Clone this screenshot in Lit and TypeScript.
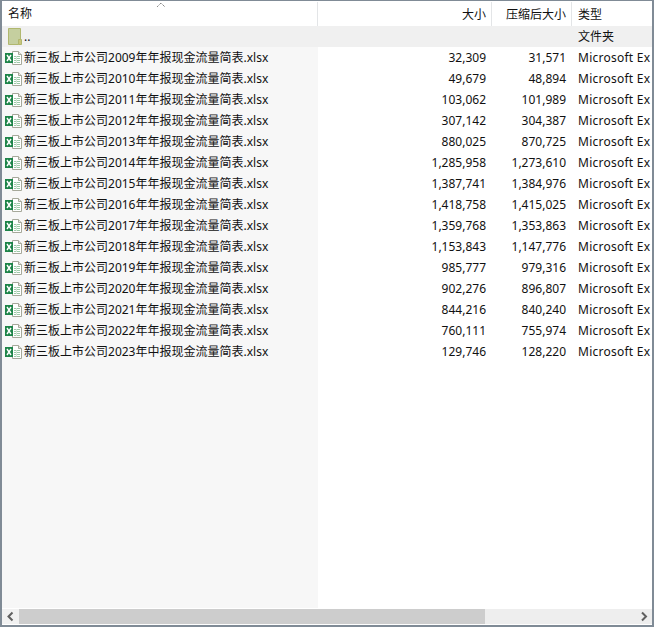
import { LitElement, html, css, svg } from "lit";
import { customElement } from "lit/decorators.js";

const rows: [string, string, string][] = [
  ["2009年年", "32,309", "31,571"],
  ["2010年年", "49,679", "48,894"],
  ["2011年年", "103,062", "101,989"],
  ["2012年年", "307,142", "304,387"],
  ["2013年年", "880,025", "870,725"],
  ["2014年年", "1,285,958", "1,273,610"],
  ["2015年年", "1,387,741", "1,384,976"],
  ["2016年年", "1,418,758", "1,415,025"],
  ["2017年年", "1,359,768", "1,353,863"],
  ["2018年年", "1,153,843", "1,147,776"],
  ["2019年年", "985,777", "979,316"],
  ["2020年年", "902,276", "896,807"],
  ["2021年年", "844,216", "840,240"],
  ["2022年年", "760,111", "755,974"],
  ["2023年中", "129,746", "128,220"],
];

const excel = svg`<svg class="ico" width="17" height="17" viewBox="0 0 17 17">
  <path d="M7.5 2.5H13.5L16.5 5.5V15.5H7.5Z" fill="#fff" stroke="#a6a89a"/>
  <path d="M13.5 2.5V5.5H16.5" fill="#e8e8e0" stroke="#a6a89a"/>
  <path d="M9 7.5h6M9 9.5h6M9 11.5h6M9 13.5h6" stroke="#9ecaa8"/>
  <path d="M11.5 7v7" stroke="#d5e6d8"/>
  <rect x="0" y="4" width="8" height="10" fill="#1e8449"/>
  <path d="M2 6 6 12M6 6 2 12" stroke="#fff" stroke-width="1.4"/>
</svg>`;

const folder = svg`<svg width="14" height="17" viewBox="0 0 14 17">
  <path d="M.5.5H12.5V12.5L10.5 16.5H.5Z" fill="#c5cf9f" stroke="#b0b76e"/>
  <path d="M10.5 11.5H13.5V16.5H10.5Z" fill="#c9c57c" stroke="#b0b76e"/>
</svg>`;

@customElement("app-root")
export class AppRoot extends LitElement {
  static styles = css`
    :host {
      display: flex;
      flex-direction: column;
      box-sizing: border-box;
      width: 654px;
      height: 627px;
      background: #fff;
      border: 2px solid #808b96;
      border-top-width: 1px;
      font: 12px/21px "Noto Sans", "Noto Sans CJK SC", sans-serif;
      color: #111;
      overflow: hidden;
    }
    .body { flex: 1; position: relative; display: flex; flex-direction: column; min-height: 0; }
    .tint { position: absolute; left: 0; top: 0; bottom: 0; width: 316px; background: #f7f7f7; }
    .row {
      position: relative;
      display: grid;
      grid-template-columns: 316px 174px 80px 1fr;
      height: 21px;
      white-space: nowrap;
      overflow: hidden;
    }
    .head { height: 25px; line-height: 26px; background: #fff; }
    .head > div { border-right: 1px solid #e3e5e7; box-sizing: border-box; height: 24px; margin-top: 1px; }
    .head > div:last-child { border-right: 0; }
    .head .name { padding-left: 6px; position: relative; }
    .caret { position: absolute; left: 154px; top: 0; display: block; }
    .parent { background: #f0f0f0; }
    .name { display: flex; align-items: center; padding-left: 3px; }
    .ico { flex: none; margin-right: 2px; }
    .parent .name { padding-left: 6px; }
    .parent svg { margin-right: 2px; }
    .num { text-align: right; padding-right: 6px; }
    .head .num { padding-right: 5px; }
    .type { padding-left: 6px; overflow: hidden; }
    .ms { letter-spacing: 0.25px; }
    .bar {
      flex: none;
      height: 15px;
      margin: 1px 0;
      display: flex;
      background: #eeeeee;
      position: relative;
    }
    .barend { flex: none; width: 17px; background: #f1f1f1; }
    .thumb { width: 466px; background: #cdcdcd; }
    .arrow { position: absolute; top: 0; }
    .arrow.l { left: 0; }
    .arrow.r { right: 0; }
  `;

  render() {
    return html`
      <div class="row head">
        <div class="name">名称<svg class="caret" width="10" height="6" viewBox="0 0 10 6"><path d="M1 5 5 1 9 5" fill="none" stroke="#8a8a8a" stroke-dasharray="1.5 .6"/></svg></div>
        <div class="num">大小</div>
        <div class="num">压缩后大小</div>
        <div class="type">类型</div>
      </div>
      <div class="body">
        <div class="tint"></div>
        <div class="row parent">
          <div class="name">${folder}..</div><div></div><div></div><div class="type">文件夹</div>
        </div>
        ${rows.map(
          ([y, s, c]) => html`<div class="row">
            <div class="name">${excel}新三板上市公司${y}报现金流量简表.xlsx</div>
            <div class="num">${s}</div>
            <div class="num">${c}</div>
            <div class="type ms">Microsoft Ex</div>
          </div>`
        )}
      </div>
      <div class="bar">
        <div class="barend"></div>
        <div class="thumb"></div>
        <svg class="arrow l" width="17" height="15" viewBox="0 0 17 15"><path d="M10.5 3.5 6.5 7.5 10.5 11.5" fill="none" stroke="#606060" stroke-width="2"/></svg>
        <svg class="arrow r" width="17" height="15" viewBox="0 0 17 15"><path d="M7 3.5 11 7.5 7 11.5" fill="none" stroke="#606060" stroke-width="2"/></svg>
      </div>
    `;
  }
}
